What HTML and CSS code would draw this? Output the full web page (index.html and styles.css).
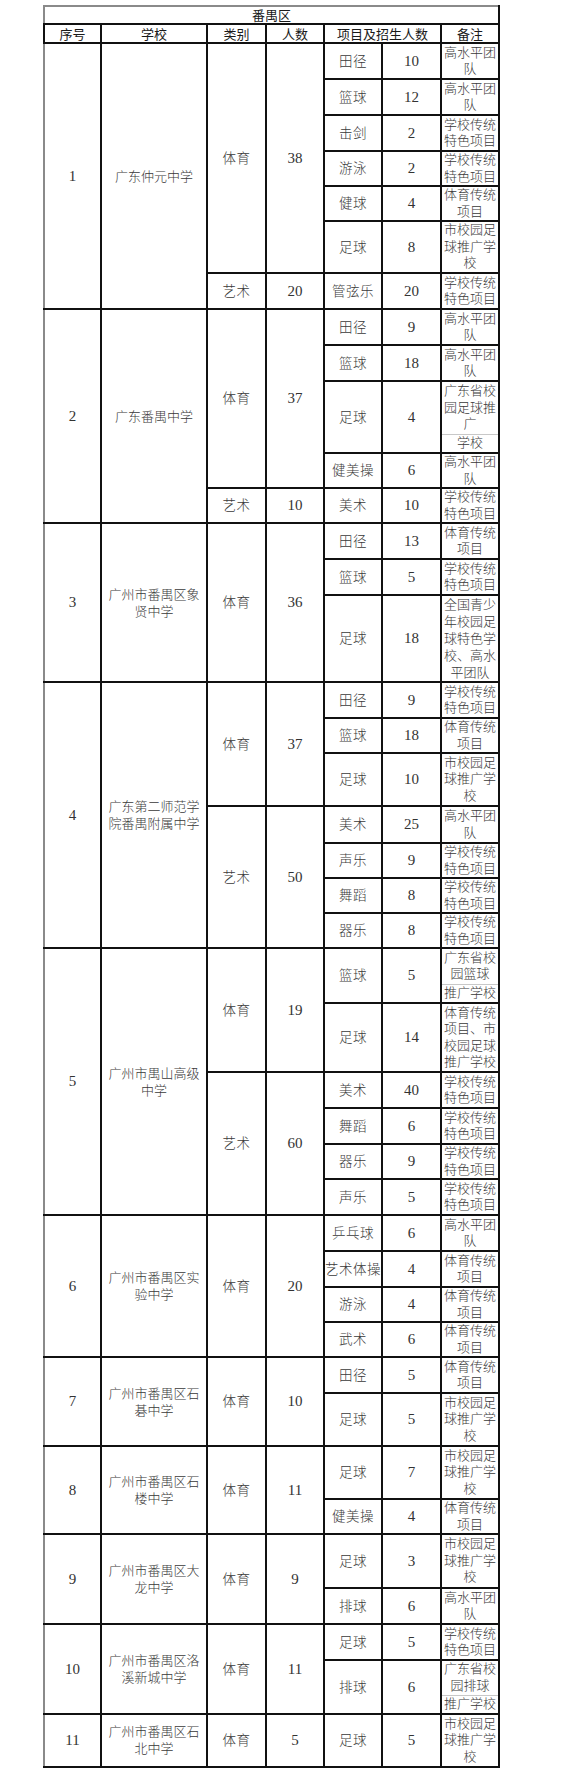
FILE: index.html
```html
<!DOCTYPE html>
<html lang="zh-CN">
<head>
<meta charset="utf-8">
<title>番禺区</title>
<link rel="stylesheet" href="styles.css">
</head>
<body>
<div class="sheet">
<table class="grid">
<colgroup>
<col class="c-no"><col class="c-school"><col class="c-type"><col class="c-num"><col class="c-item"><col class="c-cnt"><col class="c-note">
</colgroup>
<thead>
<tr class="h18"><th class="title" colspan="7">番禺区</th></tr>
<tr class="h19"><th>序号</th><th>学校</th><th>类别</th><th>人数</th><th colspan="2">项目及招生人数</th><th>备注</th></tr>
</thead>
<tbody>
<!-- 1 -->
<tr class="h36"><td rowspan="7" class="num">1</td><td rowspan="7" class="school">广东仲元中学</td><td rowspan="6" class="type">体育</td><td rowspan="6" class="num">38</td><td class="item">田径</td><td class="num">10</td><td class="note">高水平团队</td></tr>
<tr class="h36"><td class="item">篮球</td><td class="num">12</td><td class="note">高水平团队</td></tr>
<tr class="h36"><td class="item">击剑</td><td class="num">2</td><td class="note">学校传统特色项目</td></tr>
<tr class="h35"><td class="item">游泳</td><td class="num">2</td><td class="note">学校传统特色项目</td></tr>
<tr class="h35"><td class="item">健球</td><td class="num">4</td><td class="note">体育传统项目</td></tr>
<tr class="h52"><td class="item">足球</td><td class="num">8</td><td class="note">市校园足球推广学校</td></tr>
<tr class="h36"><td class="type">艺术</td><td class="num">20</td><td class="item">管弦乐</td><td class="num">20</td><td class="note">学校传统特色项目</td></tr>
<!-- 2 -->
<tr class="h36"><td rowspan="5" class="num">2</td><td rowspan="5" class="school">广东番禺中学</td><td rowspan="4" class="type">体育</td><td rowspan="4" class="num">37</td><td class="item">田径</td><td class="num">9</td><td class="note">高水平团队</td></tr>
<tr class="h36"><td class="item">篮球</td><td class="num">18</td><td class="note">高水平团队</td></tr>
<tr class="h72"><td class="item">足球</td><td class="num">4</td><td class="note">广东省校园足球推广<span class="sub">学校</span></td></tr>
<tr class="h35"><td class="item">健美操</td><td class="num">6</td><td class="note">高水平团队</td></tr>
<tr class="h35"><td class="type">艺术</td><td class="num">10</td><td class="item">美术</td><td class="num">10</td><td class="note">学校传统特色项目</td></tr>
<!-- 3 -->
<tr class="h36"><td rowspan="3" class="num">3</td><td rowspan="3" class="school">广州市番禺区象贤中学</td><td rowspan="3" class="type">体育</td><td rowspan="3" class="num">36</td><td class="item">田径</td><td class="num">13</td><td class="note">体育传统项目</td></tr>
<tr class="h36"><td class="item">篮球</td><td class="num">5</td><td class="note">学校传统特色项目</td></tr>
<tr class="h87"><td class="item">足球</td><td class="num">18</td><td class="note loose">全国青少年校园足球特色学校、高水平团队</td></tr>
<!-- 4 -->
<tr class="h36"><td rowspan="7" class="num">4</td><td rowspan="7" class="school">广东第二师范学院番禺附属中学</td><td rowspan="3" class="type">体育</td><td rowspan="3" class="num">37</td><td class="item">田径</td><td class="num">9</td><td class="note">学校传统特色项目</td></tr>
<tr class="h35"><td class="item">篮球</td><td class="num">18</td><td class="note">体育传统项目</td></tr>
<tr class="h53"><td class="item">足球</td><td class="num">10</td><td class="note">市校园足球推广学校</td></tr>
<tr class="h37"><td rowspan="4" class="type">艺术</td><td rowspan="4" class="num">50</td><td class="item">美术</td><td class="num">25</td><td class="note">高水平团队</td></tr>
<tr class="h35"><td class="item">声乐</td><td class="num">9</td><td class="note">学校传统特色项目</td></tr>
<tr class="h35"><td class="item">舞蹈</td><td class="num">8</td><td class="note">学校传统特色项目</td></tr>
<tr class="h35"><td class="item">器乐</td><td class="num">8</td><td class="note">学校传统特色项目</td></tr>
<!-- 5 -->
<tr class="h55"><td rowspan="6" class="num">5</td><td rowspan="6" class="school">广州市禺山高级中学</td><td rowspan="2" class="type">体育</td><td rowspan="2" class="num">19</td><td class="item">篮球</td><td class="num">5</td><td class="note">广东省校园篮球<span class="sub">推广学校</span></td></tr>
<tr class="h69"><td class="item">足球</td><td class="num">14</td><td class="note">体育传统项目、市校园足球推广学校</td></tr>
<tr class="h36"><td rowspan="4" class="type">艺术</td><td rowspan="4" class="num">60</td><td class="item">美术</td><td class="num">40</td><td class="note">学校传统特色项目</td></tr>
<tr class="h36"><td class="item">舞蹈</td><td class="num">6</td><td class="note">学校传统特色项目</td></tr>
<tr class="h35"><td class="item">器乐</td><td class="num">9</td><td class="note">学校传统特色项目</td></tr>
<tr class="h36"><td class="item">声乐</td><td class="num">5</td><td class="note">学校传统特色项目</td></tr>
<!-- 6 -->
<tr class="h36"><td rowspan="4" class="num">6</td><td rowspan="4" class="school">广州市番禺区实验中学</td><td rowspan="4" class="type">体育</td><td rowspan="4" class="num">20</td><td class="item">乒乓球</td><td class="num">6</td><td class="note">高水平团队</td></tr>
<tr class="h36"><td class="item">艺术体操</td><td class="num">4</td><td class="note">体育传统项目</td></tr>
<tr class="h35"><td class="item">游泳</td><td class="num">4</td><td class="note">体育传统项目</td></tr>
<tr class="h35"><td class="item">武术</td><td class="num">6</td><td class="note">体育传统项目</td></tr>
<!-- 7 -->
<tr class="h36"><td rowspan="2" class="num">7</td><td rowspan="2" class="school">广州市番禺区石碁中学</td><td rowspan="2" class="type">体育</td><td rowspan="2" class="num">10</td><td class="item">田径</td><td class="num">5</td><td class="note">体育传统项目</td></tr>
<tr class="h53"><td class="item">足球</td><td class="num">5</td><td class="note">市校园足球推广学校</td></tr>
<!-- 8 -->
<tr class="h53"><td rowspan="2" class="num">8</td><td rowspan="2" class="school">广州市番禺区石楼中学</td><td rowspan="2" class="type">体育</td><td rowspan="2" class="num">11</td><td class="item">足球</td><td class="num">7</td><td class="note">市校园足球推广学校</td></tr>
<tr class="h35"><td class="item">健美操</td><td class="num">4</td><td class="note">体育传统项目</td></tr>
<!-- 9 -->
<tr class="h54"><td rowspan="2" class="num">9</td><td rowspan="2" class="school">广州市番禺区大龙中学</td><td rowspan="2" class="type">体育</td><td rowspan="2" class="num">9</td><td class="item">足球</td><td class="num">3</td><td class="note">市校园足球推广学校</td></tr>
<tr class="h36"><td class="item">排球</td><td class="num">6</td><td class="note">高水平团队</td></tr>
<!-- 10 -->
<tr class="h36"><td rowspan="2" class="num">10</td><td rowspan="2" class="school">广州市番禺区洛溪新城中学</td><td rowspan="2" class="type">体育</td><td rowspan="2" class="num">11</td><td class="item">足球</td><td class="num">5</td><td class="note">学校传统特色项目</td></tr>
<tr class="h54"><td class="item">排球</td><td class="num">6</td><td class="note">广东省校园排球<span class="sub">推广学校</span></td></tr>
<!-- 11 -->
<tr class="h53 last"><td class="num">11</td><td class="school">广州市番禺区石北中学</td><td class="type">体育</td><td class="num">5</td><td class="item">足球</td><td class="num">5</td><td class="note">市校园足球推广学校</td></tr>
</tbody>
</table>
</div>
</body>
</html>
```
FILE: styles.css
```css
html, body {
  margin: 0;
  padding: 0;
  background: #ffffff;
}

.sheet {
  padding: 5px 0 0 43px;
}

.grid {
  border-collapse: collapse;
  table-layout: fixed;
  width: 455px;
  font-family: "Liberation Serif", "Noto Sans CJK SC", serif;
  font-weight: 300;
  color: #3a3a3a;
  border-top: 2px solid #8a8a8a;
  border-left: 2px solid #8a8a8a;
  border-right: 2px solid #111;
  border-bottom: 3px solid #111;
}

.c-no { width: 57px; }
.c-school { width: 106px; }
.c-type { width: 59px; }
.c-num { width: 58px; }
.c-item { width: 58px; }
.c-cnt { width: 59px; }
.c-note { width: 58px; }

.grid th,
.grid td {
  border: 2px solid #111;
  padding: 0;
  text-align: center;
  vertical-align: middle;
  overflow: hidden;
}

.grid th {
  font-family: "Noto Sans CJK SC", sans-serif;
  font-weight: 400;
  font-size: 13px;
  line-height: 15px;
  color: #1a1a1a;
}

.grid .title {
  border-top: 2px solid #8a8a8a;
  border-left: 2px solid #8a8a8a;
  line-height: 14px;
}

.grid tbody tr > td:first-child {
  border-left: 2px solid #8a8a8a;
}

.grid tbody tr.last td {
  border-bottom: 3px solid #111;
}

.num {
  font-size: 15px;
  font-weight: 400;
  line-height: 17px;
  color: #333;
}

.school {
  font-size: 13px;
  line-height: 17px;
  padding: 0 5px !important;
}

.type,
.item {
  font-size: 13.5px;
  line-height: 17px;
  letter-spacing: 0.5px;
}

.item {
  padding: 0 !important;
  white-space: nowrap;
}

.note {
  font-size: 13px;
  line-height: 16.5px;
  padding: 0 1px !important;
  word-break: break-all;
}

.note.loose {
  line-height: 17px;
}

.note .sub {
  display: block;
  margin: 1px -1px 0;
  border-top: 1px solid #c8c8c8;
}

.h18 { height: 18px; }
.h19 { height: 19px; }
.h35 { height: 35px; }
.h36 { height: 36px; }
.h37 { height: 37px; }
.h52 { height: 52px; }
.h53 { height: 53px; }
.h54 { height: 54px; }
.h55 { height: 55px; }
.h69 { height: 69px; }
.h72 { height: 72px; }
.h87 { height: 87px; }
```
